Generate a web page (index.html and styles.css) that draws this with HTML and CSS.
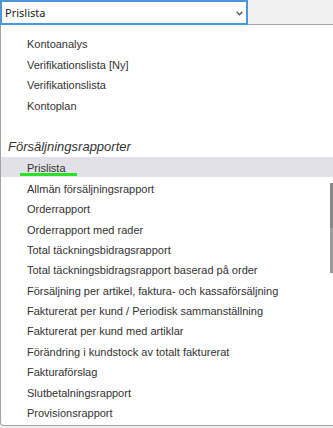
FILE: index.html
```html
<!DOCTYPE html>
<html>

<head>
    <title>Rapporter</title>
    <link rel="stylesheet" href="styles.css">
</head>

<body>
    <!-- Report picker, opened -->
    <div class="picker">
        <div class="select">
            <span class="select-value">Prislista</span>
            <svg class="chevron" width="7" height="5" viewBox="0 0 7 5">
                <polyline points="0.7,0.8 3.5,3.8 6.3,0.8" fill="none" stroke="#555" stroke-width="1.3" />
            </svg>
        </div>

        <div class="dropdown">
            <ul class="items">
                <li>Kontoanalys</li>
                <li>Verifikationslista [Ny]</li>
                <li>Verifikationslista</li>
                <li>Kontoplan</li>
            </ul>

            <div class="group-title">Försäljningsrapporter</div>

            <ul class="items">
                <li class="active">Prislista<span class="marker"></span></li>
                <li>Allmän försäljningsrapport</li>
                <li>Orderrapport</li>
                <li>Orderrapport med rader</li>
                <li>Total täckningsbidragsrapport</li>
                <li>Total täckningsbidragsrapport baserad på order</li>
                <li>Försäljning per artikel, faktura- och kassaförsäljning</li>
                <li>Fakturerat per kund / Periodisk sammanställning</li>
                <li>Fakturerat per kund med artiklar</li>
                <li>Förändring i kundstock av totalt fakturerat</li>
                <li>Fakturaförslag</li>
                <li>Slutbetalningsrapport</li>
                <li>Provisionsrapport</li>
            </ul>

            <!-- Scrollbar thumb -->
            <div class="scroll-thumb"></div>
        </div>
    </div>
</body>

</html>
```

FILE: styles.css
```css
/* Page */
body {
    margin: 0;
    width: 333px;
    height: 428px;
    overflow: hidden;
    background-color: #f0f0f0;
    font-family: "Liberation Sans", Arial, sans-serif;
}

/* Closed select box */
.select {
    position: relative;
    z-index: 1;
    width: 248px;
    height: 25px;
    box-sizing: border-box;
    border: 2px solid #4a98d9;
    background-color: #fff;
    padding: 0 3px 0 3px;
    display: flex;
    align-items: center;
    justify-content: space-between;
}

.select-value {
    font-family: "Noto Sans", sans-serif;
    font-size: 11px;
    color: #222;
}

.chevron {
    margin-top: 2px;
}

/* Open list, cut off at the right edge of the window */
.dropdown {
    position: relative;
    margin-top: -1px;
    width: 333px;
    height: 402px;
    box-sizing: border-box;
    border: 1px solid #a3a3a3;
    border-right: none;
    border-radius: 0 0 0 4px;
    background-color: #fff;
    padding-top: 8px;
}

.items {
    list-style: none;
    margin: 0;
    padding: 0;
}

.items li {
    position: relative;
    height: 20.4px;
    box-sizing: border-box;
    padding: 2.4px 0 0 26px;
    line-height: 18px;
    font-size: 11px;
    color: #333;
    white-space: nowrap;
    overflow: hidden;
}

.items li.active {
    background-color: #e1e1e7;
}

/* Green underline on the chosen item */
.marker {
    position: absolute;
    left: 19px;
    top: 16px;
    width: 57px;
    height: 3px;
    background-color: #27e327;
}

.group-title {
    margin-top: 21.4px;
    height: 21px;
    line-height: 21px;
    padding-left: 7px;
    font-size: 13px;
    font-style: italic;
    color: #333;
}

.scroll-thumb {
    position: absolute;
    left: 329px;
    top: 158px;
    width: 3px;
    height: 90px;
    background: linear-gradient(#888 0, #888 50%, #9a9a9a 50%, #9a9a9a 100%);
}
```
